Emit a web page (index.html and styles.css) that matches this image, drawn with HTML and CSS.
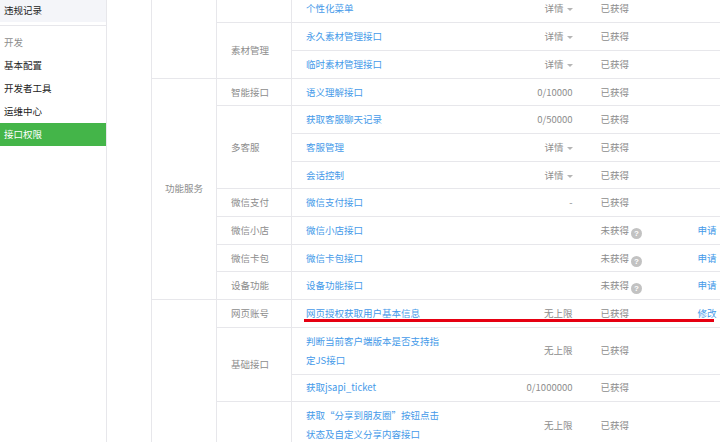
FILE: index.html
```html
<!DOCTYPE html>
<html lang="zh-CN">
<head>
    <meta charset="UTF-8">
    <title>接口权限</title>
    <link rel="stylesheet" href="styles.css">
</head>
<body>
<div class="page">
    <!-- 左侧菜单 -->
    <div class="menu">
        <a class="menu-item menu-item-top" href="#">违规记录</a>
        <div class="menu-group">
            <div class="menu-title">开发</div>
            <a class="menu-item" href="#">基本配置</a>
            <a class="menu-item" href="#">开发者工具</a>
            <a class="menu-item" href="#">运维中心</a>
            <a class="menu-item selected" href="#">接口权限</a>
        </div>
    </div>

    <!-- 接口权限表 -->
    <div class="main">
        <table class="perm-table">
            <colgroup>
                <col class="col-cat">
                <col class="col-sub">
                <col class="col-api">
                <col class="col-quota">
                <col class="col-state">
                <col class="col-op">
            </colgroup>
            <tbody>
                <tr>
                    <td class="cat" rowspan="3"></td>
                    <td class="sub"></td>
                    <td class="api"><a href="#">个性化菜单</a></td>
                    <td class="quota"><span class="detail">详情</span></td>
                    <td class="state">已获得</td>
                    <td class="op"></td>
                </tr>
                <tr>
                    <td class="sub" rowspan="2">素材管理</td>
                    <td class="api"><a href="#">永久素材管理接口</a></td>
                    <td class="quota"><span class="detail">详情</span></td>
                    <td class="state">已获得</td>
                    <td class="op"></td>
                </tr>
                <tr>
                    <td class="api"><a href="#">临时素材管理接口</a></td>
                    <td class="quota"><span class="detail">详情</span></td>
                    <td class="state">已获得</td>
                    <td class="op"></td>
                </tr>
                <tr>
                    <td class="cat" rowspan="8">功能服务</td>
                    <td class="sub">智能接口</td>
                    <td class="api"><a href="#">语义理解接口</a></td>
                    <td class="quota">0/10000</td>
                    <td class="state">已获得</td>
                    <td class="op"></td>
                </tr>
                <tr>
                    <td class="sub" rowspan="3">多客服</td>
                    <td class="api"><a href="#">获取客服聊天记录</a></td>
                    <td class="quota">0/50000</td>
                    <td class="state">已获得</td>
                    <td class="op"></td>
                </tr>
                <tr>
                    <td class="api"><a href="#">客服管理</a></td>
                    <td class="quota"><span class="detail">详情</span></td>
                    <td class="state">已获得</td>
                    <td class="op"></td>
                </tr>
                <tr>
                    <td class="api"><a href="#">会话控制</a></td>
                    <td class="quota"><span class="detail">详情</span></td>
                    <td class="state">已获得</td>
                    <td class="op"></td>
                </tr>
                <tr>
                    <td class="sub">微信支付</td>
                    <td class="api"><a href="#">微信支付接口</a></td>
                    <td class="quota">-</td>
                    <td class="state">已获得</td>
                    <td class="op"></td>
                </tr>
                <tr>
                    <td class="sub">微信小店</td>
                    <td class="api"><a href="#">微信小店接口</a></td>
                    <td class="quota"></td>
                    <td class="state">未获得<span class="help">?</span></td>
                    <td class="op"><a href="#">申请</a></td>
                </tr>
                <tr>
                    <td class="sub">微信卡包</td>
                    <td class="api"><a href="#">微信卡包接口</a></td>
                    <td class="quota"></td>
                    <td class="state">未获得<span class="help">?</span></td>
                    <td class="op"><a href="#">申请</a></td>
                </tr>
                <tr>
                    <td class="sub">设备功能</td>
                    <td class="api"><a href="#">设备功能接口</a></td>
                    <td class="quota"></td>
                    <td class="state">未获得<span class="help">?</span></td>
                    <td class="op"><a href="#">申请</a></td>
                </tr>
                <tr>
                    <td class="cat" rowspan="8">网页服务</td>
                    <td class="sub">网页账号</td>
                    <td class="api"><a href="#">网页授权获取用户基本信息</a></td>
                    <td class="quota">无上限</td>
                    <td class="state">已获得</td>
                    <td class="op"><a href="#">修改</a></td>
                </tr>
                <tr>
                    <td class="sub" rowspan="2">基础接口</td>
                    <td class="api"><a href="#">判断当前客户端版本是否支持指定JS接口</a></td>
                    <td class="quota">无上限</td>
                    <td class="state">已获得</td>
                    <td class="op"></td>
                </tr>
                <tr>
                    <td class="api"><a href="#">获取jsapi_ticket</a></td>
                    <td class="quota">0/1000000</td>
                    <td class="state">已获得</td>
                    <td class="op"></td>
                </tr>
                <tr>
                    <td class="sub" rowspan="5">分享接口</td>
                    <td class="api"><a href="#">获取“分享到朋友圈”按钮点击状态及自定义分享内容接口</a></td>
                    <td class="quota">无上限</td>
                    <td class="state">已获得</td>
                    <td class="op"></td>
                </tr>
                <tr>
                    <td class="api"><a href="#">获取“分享给朋友”按钮点击状态及自定义分享内容接口</a></td>
                    <td class="quota">无上限</td>
                    <td class="state">已获得</td>
                    <td class="op"></td>
                </tr>
                <tr>
                    <td class="api"><a href="#">获取“分享到QQ”按钮点击状态及自定义分享内容接口</a></td>
                    <td class="quota">无上限</td>
                    <td class="state">已获得</td>
                    <td class="op"></td>
                </tr>
                <tr>
                    <td class="api"><a href="#">获取“分享到腾讯微博”按钮点击状态及自定义分享内容接口</a></td>
                    <td class="quota">无上限</td>
                    <td class="state">已获得</td>
                    <td class="op"></td>
                </tr>
                <tr>
                    <td class="api"><a href="#">获取“分享到QQ空间”按钮点击状态及自定义分享内容接口</a></td>
                    <td class="quota">无上限</td>
                    <td class="state">已获得</td>
                    <td class="op"></td>
                </tr>
            </tbody>
        </table>
    </div>

    <!-- 红色标注线 -->
    <div class="mark"></div>
</div>
</body>
</html>
```

FILE: styles.css
```css
body {
    margin: 0;
    font-family: "Noto Sans CJK SC", sans-serif;
    font-size: 9.5px;
    color: #222;
    background-color: #fff;
    overflow: hidden;
}

.page {
    display: flex;
    position: relative;
    height: 442px;
    overflow: hidden;
}

/* 左侧菜单 */
.menu {
    width: 106px;
    flex-shrink: 0;
    border-right: 1px solid #e7e7eb;
}

.menu-item {
    display: block;
    height: 23px;
    line-height: 23px;
    padding-left: 4px;
    color: #222;
    text-decoration: none;
}

.menu-item-top {
    height: 22px;
    line-height: 20px;
    background-color: #f4f5f9;
}

.menu-group {
    margin-top: 3px;
    padding-top: 5px;
    border-top: 1px solid #e7e7eb;
}

.menu-title {
    height: 23px;
    line-height: 23px;
    padding-left: 4px;
    color: #8d8d8d;
}

.menu-item.selected {
    background-color: #44b549;
    color: #fff;
}

/* 表格区域 */
.main {
    flex: 1;
    padding-left: 44px;
}

.perm-table {
    width: 569px;
    margin-top: -4.4px;
    border-collapse: collapse;
    table-layout: fixed;
    border-left: 1px solid #e7e7eb;
}

.col-cat { width: 65px; }
.col-sub { width: 75px; }
.col-api { width: 165px; }
.col-quota { width: 130px; }
.col-state { width: 94px; }
.col-op { width: 40px; }

.perm-table td {
    padding: 3.85px 14px;
    line-height: 19px;
    border-bottom: 1px solid #e7e7eb;
    vertical-align: middle;
    color: #8d8d8d;
    text-align: left;
}

.perm-table td.cat,
.perm-table td.sub {
    border-right: 1px solid #e7e7eb;
    white-space: nowrap;
}

.perm-table td.cat {
    padding-left: 13px;
    padding-right: 0;
}

.perm-table a {
    color: #459ae9;
    text-decoration: none;
}

.perm-table td.quota {
    text-align: right;
}

.perm-table td.op {
    text-align: right;
    padding-right: 4px;
    padding-left: 0;
}

/* 详情下拉小三角 */
.detail::after {
    content: "";
    display: inline-block;
    margin-left: 3px;
    border-left: 3px solid transparent;
    border-right: 3px solid transparent;
    border-top: 3px solid #b5b5b5;
    vertical-align: middle;
}

/* 问号图标 */
.help {
    display: inline-block;
    width: 11px;
    height: 11px;
    margin-left: 2px;
    border-radius: 50%;
    background-color: #c2c2c2;
    color: #fff;
    font-family: "Liberation Sans", sans-serif;
    font-size: 8px;
    font-weight: bold;
    line-height: 11px;
    text-align: center;
    vertical-align: -2px;
}

/* 红色标注 */
.mark {
    position: absolute;
    left: 304px;
    top: 319px;
    width: 410px;
    height: 2.5px;
    background-color: #e60012;
}
```
